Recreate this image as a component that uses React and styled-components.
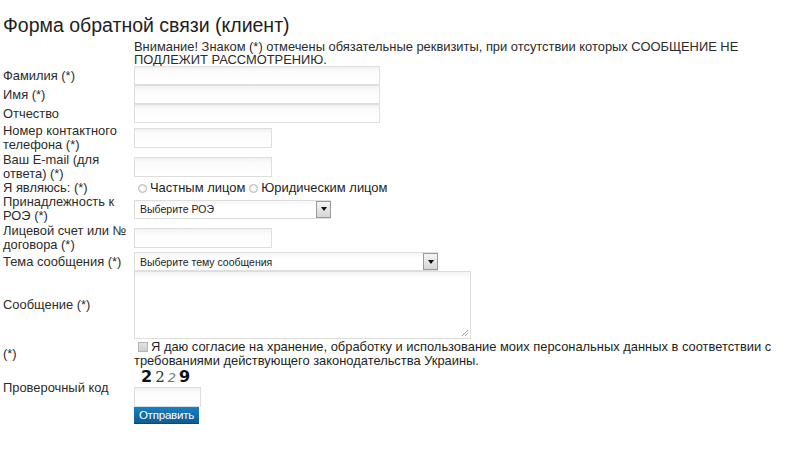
import React from "react";
import styled, { createGlobalStyle } from "styled-components";

const Global = createGlobalStyle`
  html, body { margin: 0; padding: 0; background: #fff; }
  body { font-family: Arial, "Liberation Sans", sans-serif; color: #2b2b2b; }
`;

const Page = styled.div`
  padding: 14px 0 0 3px;
  width: 797px;
`;

const Title = styled.h1`
  margin: 0 0 4px 0;
  font-size: 19.5px;
  line-height: 22px;
  font-weight: normal;
  color: #1e1e1e;
`;

const Form = styled.div`
  display: grid;
  grid-template-columns: 131px auto;
  align-items: center;
  font-size: 12.9px;
  line-height: 14px;
`;

const Label = styled.div`
  padding-right: 4px;
`;

const Cell = styled.div`
  display: flex;
  flex-direction: ${(p) => (p.$col ? "column" : "row")};
  align-items: ${(p) => (p.$col ? "flex-start" : "center")};
  min-height: ${(p) => p.$h || 0}px;
`;

const Notice = styled.div`
  grid-column: 2;
  line-height: 13px;
  margin-bottom: 0;
  width: 642px;
`;

const Input = styled.div`
  box-sizing: border-box;
  width: ${(p) => p.$w}px;
  height: ${(p) => p.$hh || 19}px;
  margin-top: ${(p) => p.$mt || 0}px;
  border: 1px solid #dedede;
  background: linear-gradient(#f1f1f1, #fcfcfc 5px, #fff);
`;

const SelectBox = styled.div`
  box-sizing: border-box;
  width: ${(p) => p.$w}px;
  height: 19px;
  border: 1px solid #dedede;
  background: linear-gradient(#f6f6f6, #fff 6px);
  display: flex;
  align-items: center;
  justify-content: space-between;
  padding-left: 5px;
  font-size: 10.5px;
  color: #222;
`;

const Arrow = styled.div`
  box-sizing: border-box;
  width: 15px;
  height: 17px;
  border: 1px solid #9a9a9a;
  background: linear-gradient(#f4f4f4, #d6d6d6);
  display: flex;
  align-items: center;
  justify-content: center;
  margin-right: -1px;
  &::after {
    content: "";
    border-left: 3.5px solid transparent;
    border-right: 3.5px solid transparent;
    border-top: 4px solid #111;
  }
`;

const Textarea = styled.div`
  box-sizing: border-box;
  position: relative;
  width: 337px;
  height: 68px;
  border: 1px solid #dedede;
  background: linear-gradient(#f3f3f3, #fff 6px);
`;

const Grip = styled.svg`
  position: absolute;
  right: 1px;
  bottom: 1px;
`;

const Radio = styled.span`
  display: inline-block;
  box-sizing: border-box;
  width: 9px;
  height: 9px;
  border-radius: 50%;
  border: 1px solid #b8b8b8;
  background: radial-gradient(#fff 30%, #d8d8d8);
  margin: 0 3px 0 4px;
`;

const RadioRow = styled.div`
  display: flex;
  align-items: center;
  font-size: 12.95px;
  color: #1e1e1e;
`;

const Consent = styled.div`
  font-size: 12.9px;
  line-height: 14px;
  color: #1e1e1e;
  padding: 1px 0 0 0;
`;

const Check = styled.span`
  display: inline-block;
  box-sizing: border-box;
  width: 10px;
  height: 10px;
  border: 1px solid #b5b5b5;
  background: linear-gradient(#e2e2e2, #cfcfcf);
  margin: 0 3px 0 4px;
  vertical-align: -1px;
`;

const Captcha = styled.div`
  display: flex;
  align-items: baseline;
  height: 17px;
  padding-left: 7px;
  font-family: "DejaVu Sans", sans-serif;
  font-size: 16px;
  line-height: 17px;
`;

const CapChar = styled.span`
  font-weight: ${(p) => p.$wgt || "bold"};
  color: ${(p) => p.$c || "#111"};
  font-size: ${(p) => p.$s || 16}px;
  font-style: ${(p) => (p.$it ? "italic" : "normal")};
  font-family: ${(p) => (p.$serif ? '"DejaVu Serif", serif' : "inherit")};
  margin-right: ${(p) => p.$mr ?? 2}px;
`;

const Button = styled.div`
  box-sizing: border-box;
  width: 65px;
  height: 17px;
  background: linear-gradient(#1a7fc0, #0a5d98);
  border-bottom: 1px solid #07497a;
  color: #fff;
  font-size: 11.5px;
  line-height: 16px;
  text-align: center;
  letter-spacing: -0.2px;
`;

const Row = ({ label, h, children, col }) => (
  <>
    <Label>{label}</Label>
    <Cell $h={h} $col={col}>{children}</Cell>
  </>
);

export default function App() {
  return (
    <Page>
      <Global />
      <Title>Форма обратной связи (клиент)</Title>
      <Form>
        <Notice>
          Внимание! Знаком (*) отмечены обязательные реквизиты, при отсутствии которых СООБЩЕНИЕ НЕ ПОДЛЕЖИТ РАССМОТРЕНИЮ.
        </Notice>
        <Row label="Фамилия (*)" h={19}><Input $w={246} /></Row>
        <Row label="Имя (*)" h={19}><Input $w={246} /></Row>
        <Row label="Отчество" h={19}><Input $w={246} /></Row>
        <Row label="Номер контактного телефона (*)" h={29}><Input $w={138} $hh={20} /></Row>
        <Row label="Ваш E-mail (для ответа) (*)" h={29}><Input $w={138} $hh={20} /></Row>
        <Row label="Я являюсь: (*)" h={14}>
          <RadioRow>
            <Radio />Частным лицом<Radio />Юридическим лицом
          </RadioRow>
        </Row>
        <Row label="Принадлежность к РОЭ (*)" h={28}>
          <SelectBox $w={197}>Выберите РОЭ<Arrow /></SelectBox>
        </Row>
        <Row label="Лицевой счет или № договора (*)" h={29}><Input $w={138} $hh={20} /></Row>
        <Row label="Тема сообщения (*)" h={19}>
          <SelectBox $w={304}>Выберите тему сообщения<Arrow /></SelectBox>
        </Row>
        <Row label="Сообщение (*)" h={68}>
          <Textarea>
            <Grip width="8" height="8" viewBox="0 0 8 8">
              <path d="M7 1L1 7M7 4L4 7" stroke="#9a9a9a" strokeWidth="1" />
            </Grip>
          </Textarea>
        </Row>
        <Row label="(*)" h={29}>
          <Consent>
            <Check />Я даю согласие на хранение, обработку и использование моих персональных данных в соответствии с требованиями действующего законодательства Украины.
          </Consent>
        </Row>
        <Row label="Проверочный код" col>
          <Captcha>
            <CapChar $mr={3}>2</CapChar>
            <CapChar $serif $wgt="normal" $c="#333" $s={15} $mr={3}>2</CapChar>
            <CapChar $it $wgt="normal" $c="#777" $s={13} $mr={3}>2</CapChar>
            <CapChar>9</CapChar>
          </Captcha>
          <Input $w={67} $hh={20} $mt={2} />
        </Row>
        <Row label="">
          <Button>Отправить</Button>
        </Row>
      </Form>
    </Page>
  );
}
